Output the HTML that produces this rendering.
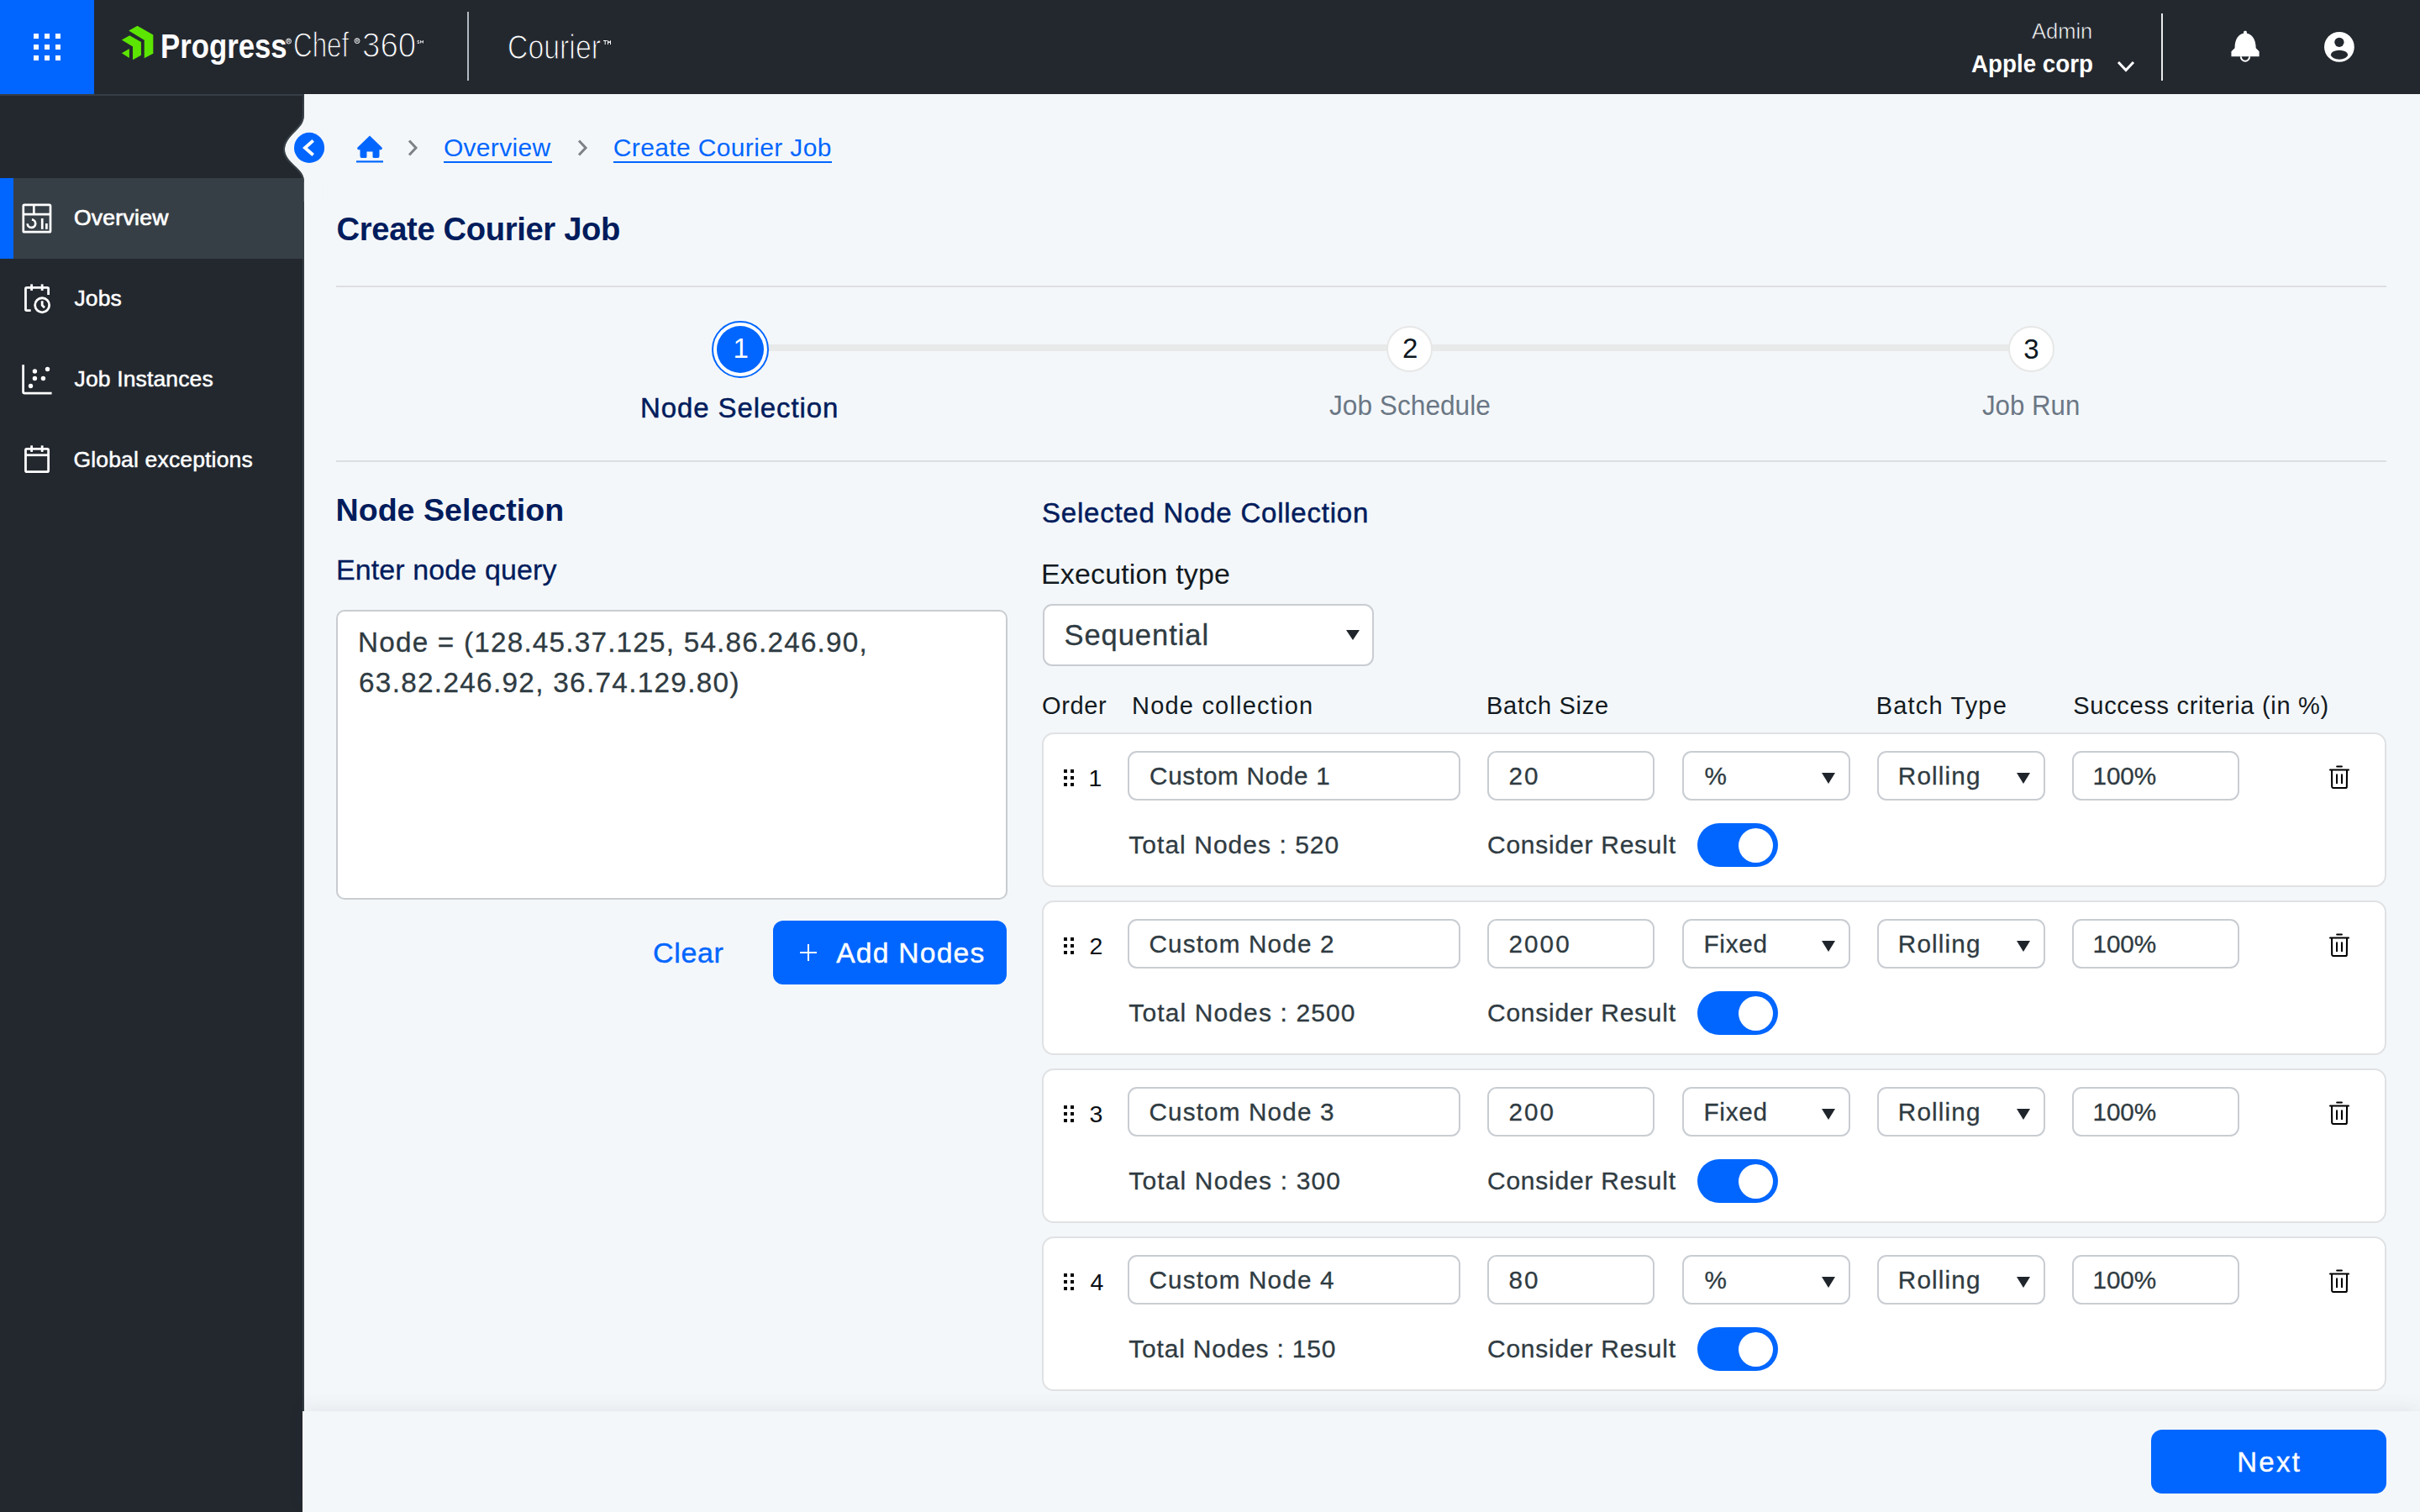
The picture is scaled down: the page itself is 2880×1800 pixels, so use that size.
<!DOCTYPE html>
<html><head><meta charset="utf-8"><title>Create Courier Job</title>
<style>
html,body{margin:0;padding:0;}
body{width:2880px;height:1800px;overflow:hidden;position:relative;background:#f4f7fa;font-family:"Liberation Sans",sans-serif;}
.a{position:absolute;box-sizing:border-box;}
.t{position:absolute;white-space:nowrap;line-height:1;}
.inp{position:absolute;box-sizing:border-box;background:#fff;border:2px solid #c9cdd2;border-radius:11px;}
.tri{position:absolute;width:0;height:0;border-left:8px solid transparent;border-right:8px solid transparent;border-top:13px solid #1f252b;}
.card{position:absolute;box-sizing:border-box;left:1240px;width:1600px;height:184px;background:#fff;border:2px solid #dfe1e3;border-radius:14px;}
.dot{position:absolute;width:4px;height:4px;background:#000;}
.tog{position:absolute;left:2020px;width:96px;height:52px;border-radius:26px;background:#0066ff;}
@media (max-width:2000px){html{zoom:0.5;}}
.tog:after{content:"";position:absolute;left:49px;top:5.5px;width:41px;height:41px;border-radius:50%;background:#fff;}
</style></head><body>
<!-- header -->
<div class="a" style="left:0;top:0;width:2880px;height:112px;background:#23282f;"></div>
<div class="a" style="left:0;top:0;width:112px;height:112px;background:#0066ff;"></div>
<svg class="a" style="left:0;top:0" width="112" height="112">
 <g fill="#fff">
 <rect x="40" y="40" width="6" height="6"/><rect x="53" y="40" width="6" height="6"/><rect x="66" y="40" width="6" height="6"/>
 <rect x="40" y="53" width="6" height="6"/><rect x="53" y="53" width="6" height="6"/><rect x="66" y="53" width="6" height="6"/>
 <rect x="40" y="66" width="6" height="6"/><rect x="53" y="66" width="6" height="6"/><rect x="66" y="66" width="6" height="6"/>
 </g></svg>
<svg class="a" style="left:140px;top:26px" width="50" height="50" viewBox="0 0 1512 1512">
 <g fill="#5ce500">
 <polygon points="400,320 710,145 1280,470 1280,1140 960,1310 960,660"/>
 <polygon points="145,650 430,490 845,725 845,1200 545,1365 545,890"/>
 <polygon points="145,1130 420,965 420,1300"/>
 </g></svg>
<svg class="a" style="left:330px;top:40px" width="400" height="20" viewBox="330 40 400 20" fill="none" stroke="#fff" stroke-width="0.9">
 <circle cx="343.5" cy="49" r="3"/><path d="M342.5,50.8 L342.5,47.2 L344,47.2 Q345,47.2 345,48.2 Q345,49.1 344,49.1 L342.5,49.1 M344,49.1 L345,50.8" stroke-width="0.7"/>
 <circle cx="425" cy="48.6" r="3"/><path d="M424,50.4 L424,46.8 L425.5,46.8 Q426.5,46.8 426.5,47.8 Q426.5,48.7 425.5,48.7 L424,48.7 M425.5,48.7 L426.5,50.4" stroke-width="0.7"/>
 <path d="M499,48.5 Q496.5,48 496.5,49 Q496.5,49.8 498,50 Q499.5,50.3 499,51.3 Q498.5,51.8 496.5,51.3 M500.5,51.5 L500.5,48.3 L502,50.5 L503.5,48.3 L503.5,51.5" stroke-width="0.8"/>
 <path d="M718,48.5 L722.5,48.5 M720.2,48.5 L720.2,53 M723.5,53 L723.5,48.5 L725,51 L726.5,48.5 L726.5,53" stroke-width="1"/>
</svg>
<div class="a" style="left:556px;top:14px;width:2px;height:82px;background:#b2b9c1;"></div>
<svg class="a" style="left:2510px;top:66px" width="40" height="30" viewBox="0 0 40 30"><polyline points="11,8 20,17.5 29,8" fill="none" stroke="#fff" stroke-width="3"/></svg>
<div class="a" style="left:2572px;top:16px;width:2px;height:80px;background:#e8eaec;"></div>
<svg class="a" style="left:2620px;top:20px" width="220" height="80" viewBox="0 0 2420 880">
 <g fill="#fff">
  <rect x="552" y="185" width="40" height="45" rx="15"/>
  <path d="M435,410 C435,290 490,215 572,215 C654,215 712,290 712,410 L755,455 L755,520 L390,520 L390,455 Z"/>
  <path d="M515,520 A57,60 0 0 0 629,520" fill="none" stroke="#fff" stroke-width="22"/>
  <circle cx="1803" cy="395" r="197"/>
 </g>
 <g fill="#23282f">
  <circle cx="1803" cy="333" r="62"/>
  <ellipse cx="1804" cy="497" rx="111" ry="60"/>
 </g>
</svg>
<!-- sidebar -->
<div class="a" style="left:0;top:112px;width:362px;height:1688px;background:#23282f;border-top:2px solid #363d44;"></div>
<div class="a" style="left:360px;top:112px;width:2px;height:26px;background:#363d44;"></div>
<div class="a" style="left:360px;top:308px;width:2px;height:1372px;background:#343b42;"></div>
<div class="a" style="left:0;top:212px;width:362px;height:96px;background:#373f46;"></div>
<div class="a" style="left:0;top:212px;width:16px;height:96px;background:#0066ff;"></div>
<svg class="a" style="left:20px;top:236px" width="50" height="48" viewBox="0 0 1575 1512" fill="none" stroke="#fff" stroke-width="85">
 <rect x="245" y="245" width="1015" height="1020" rx="40"/>
 <line x1="245" y1="600" x2="1260" y2="600"/><line x1="640" y1="245" x2="640" y2="600"/>
 <path d="M565,800 A150,150 0 1 1 400,950"/>
 <line x1="952" y1="755" x2="952" y2="1160"/><line x1="1115" y1="945" x2="1115" y2="1160"/>
</svg>
<svg class="a" style="left:20px;top:332px" width="50" height="48" viewBox="0 0 1575 1512" fill="none" stroke="#fff" stroke-width="88">
 <path d="M525,1185 L370,1185 Q330,1185 330,1145 L330,370 Q330,330 370,330 L1145,330 Q1185,330 1185,370 L1185,600"/>
 <line x1="555" y1="200" x2="555" y2="440"/><line x1="950" y1="200" x2="950" y2="440"/>
 <circle cx="950" cy="985" r="268"/>
 <path d="M950,830 L950,990 L1040,1080"/>
</svg>
<svg class="a" style="left:20px;top:428px" width="50" height="48" viewBox="0 0 1575 1512">
 <path d="M240,200 L240,1215 Q240,1265 290,1265 L1310,1265" fill="none" stroke="#fff" stroke-width="88"/>
 <g fill="#fff"><circle cx="675" cy="440" r="85"/><circle cx="1150" cy="360" r="85"/><circle cx="675" cy="710" r="85"/><circle cx="990" cy="710" r="85"/><circle cx="520" cy="990" r="85"/></g>
</svg>
<svg class="a" style="left:20px;top:524px" width="50" height="48" viewBox="0 0 1575 1512" fill="none" stroke="#fff" stroke-width="88">
 <rect x="330" y="330" width="855" height="855" rx="45"/>
 <line x1="330" y1="560" x2="1185" y2="560"/>
 <line x1="555" y1="200" x2="555" y2="440"/><line x1="950" y1="200" x2="950" y2="440"/>
</svg>
<!-- notch -->
<svg class="a" style="left:300px;top:100px" width="180" height="140" viewBox="0 0 1944 1512">
 <path d="M668,390 C668,480 640,520 575,585 C500,660 420,740 420,840 C420,935 490,1000 575,1080 C640,1140 668,1180 668,1260 L668,1512 L900,1512 L900,390 Z" fill="#f4f7fa" stroke="none"/>
 <path transform="translate(-10,0)" d="M668,260 L668,390 C668,480 640,520 575,585 C500,660 420,740 420,840 C420,935 490,1000 575,1080 C640,1140 668,1180 668,1260" fill="none" stroke="#3a4249" stroke-width="22"/>
 <circle cx="735" cy="820" r="195" fill="#0066ff"/>
 <polyline points="785,728 680,820 785,912" fill="none" stroke="#fff" stroke-width="42"/>
</svg>
<!-- breadcrumb -->
<svg class="a" style="left:420px;top:156px" width="40" height="40" viewBox="0 0 40 40">
 <path d="M20,5.5 L34.5,19.5 Q35.5,21 34,22.3 L31.5,22.3 L31.5,30 Q31.5,32 29.5,32 L25,32 Q23.5,32 23.5,30.5 L23.5,24.5 L16.5,24.5 L16.5,30.5 Q16.5,32 15,32 L10.5,32 Q8.5,32 8.5,30 L8.5,22.3 L6,22.3 Q4.5,21 5.5,19.5 Z" fill="#0066ff"/>
 <rect x="4" y="35.3" width="32" height="2.2" fill="#0066ff"/>
</svg>
<svg class="a" style="left:480px;top:160px" width="24" height="32" viewBox="0 0 24 32"><polyline points="7,7.5 15,16 7,24.5" fill="none" stroke="#7d8287" stroke-width="3"/></svg>
<svg class="a" style="left:682px;top:160px" width="24" height="32" viewBox="0 0 24 32"><polyline points="7,7.5 15,16 7,24.5" fill="none" stroke="#7d8287" stroke-width="3"/></svg>
<div class="a" style="left:528px;top:191.5px;width:128.5px;height:2.3px;background:#0066ff;"></div>
<div class="a" style="left:730px;top:191.5px;width:259.5px;height:2.3px;background:#0066ff;"></div>
<!-- separators -->
<div class="a" style="left:400px;top:340px;width:2440px;height:2px;background:#dcdedf;"></div>
<div class="a" style="left:400px;top:548px;width:2440px;height:2px;background:#dcdedf;"></div>
<!-- stepper -->
<div class="a" style="left:912px;top:410px;width:1480px;height:8px;background:#e8e9e9;"></div>
<div class="a" style="left:847px;top:382px;width:68px;height:68px;border-radius:50%;border:2.5px solid #0066ff;background:#fff;"></div>
<div class="a" style="left:853px;top:388px;width:56px;height:56px;border-radius:50%;background:#0066ff;"></div>
<div class="a" style="left:1650px;top:388px;width:55px;height:55px;border-radius:50%;border:2px solid #e6e7e7;background:#fff;"></div>
<div class="a" style="left:2389.5px;top:388px;width:55px;height:55px;border-radius:50%;border:2px solid #e6e7e7;background:#fff;"></div>
<!-- left panel -->
<div class="a" style="left:400px;top:726px;width:799px;height:345px;background:#fff;border:2px solid #c9ccd0;border-radius:10px;"></div>
<div class="a" style="left:920px;top:1096px;width:278px;height:76px;background:#0066ff;border-radius:12px;"></div>
<div class="a" style="left:951.5px;top:1132.8px;width:20.5px;height:2.5px;background:#fff;"></div>
<div class="a" style="left:960.5px;top:1123.8px;width:2.5px;height:20.5px;background:#fff;"></div>
<!-- right panel -->
<div class="inp" style="left:1241px;top:719px;width:394px;height:74px;"></div>
<div class="tri" style="left:1601.5px;top:749.5px;border-left-width:8.2px;border-right-width:8.2px;border-top-width:12.5px;"></div>
<div class="card" style="top:872px;"></div>
<div class="dot" style="left:1266px;top:916px"></div><div class="dot" style="left:1274px;top:916px"></div>
<div class="dot" style="left:1266px;top:924px"></div><div class="dot" style="left:1274px;top:924px"></div>
<div class="dot" style="left:1266px;top:932px"></div><div class="dot" style="left:1274px;top:932px"></div>
<div class="inp" style="left:1342px;top:894px;width:396px;height:59px;"></div>
<div class="inp" style="left:1770px;top:894px;width:199px;height:59px;"></div>
<div class="inp" style="left:2002px;top:894px;width:200px;height:59px;"></div>
<div class="tri" style="left:2168px;top:919.5px;"></div>
<div class="inp" style="left:2234px;top:894px;width:199.5px;height:59px;"></div>
<div class="tri" style="left:2400px;top:919.5px;"></div>
<div class="inp" style="left:2466px;top:894px;width:199px;height:59px;"></div>
<svg class="a" style="left:2750px;top:895px" width="70" height="60" viewBox="0 0 1764 1512" fill="none" stroke="#000" stroke-width="52" stroke-linecap="round">
 <line x1="785" y1="440" x2="930" y2="440"/><line x1="580" y1="540" x2="1135" y2="540"/>
 <path d="M630,545 L635,1050 Q640,1085 680,1085 L1040,1085 Q1080,1085 1080,1050 L1085,545" stroke-linecap="butt"/>
 <line x1="782" y1="690" x2="782" y2="940"/><line x1="932" y1="690" x2="932" y2="940"/>
</svg>
<div class="tog" style="top:980px;"></div>
<div class="card" style="top:1072px;"></div>
<div class="dot" style="left:1266px;top:1116px"></div><div class="dot" style="left:1274px;top:1116px"></div>
<div class="dot" style="left:1266px;top:1124px"></div><div class="dot" style="left:1274px;top:1124px"></div>
<div class="dot" style="left:1266px;top:1132px"></div><div class="dot" style="left:1274px;top:1132px"></div>
<div class="inp" style="left:1342px;top:1094px;width:396px;height:59px;"></div>
<div class="inp" style="left:1770px;top:1094px;width:199px;height:59px;"></div>
<div class="inp" style="left:2002px;top:1094px;width:200px;height:59px;"></div>
<div class="tri" style="left:2168px;top:1119.5px;"></div>
<div class="inp" style="left:2234px;top:1094px;width:199.5px;height:59px;"></div>
<div class="tri" style="left:2400px;top:1119.5px;"></div>
<div class="inp" style="left:2466px;top:1094px;width:199px;height:59px;"></div>
<svg class="a" style="left:2750px;top:1095px" width="70" height="60" viewBox="0 0 1764 1512" fill="none" stroke="#000" stroke-width="52" stroke-linecap="round">
 <line x1="785" y1="440" x2="930" y2="440"/><line x1="580" y1="540" x2="1135" y2="540"/>
 <path d="M630,545 L635,1050 Q640,1085 680,1085 L1040,1085 Q1080,1085 1080,1050 L1085,545" stroke-linecap="butt"/>
 <line x1="782" y1="690" x2="782" y2="940"/><line x1="932" y1="690" x2="932" y2="940"/>
</svg>
<div class="tog" style="top:1180px;"></div>
<div class="card" style="top:1272px;"></div>
<div class="dot" style="left:1266px;top:1316px"></div><div class="dot" style="left:1274px;top:1316px"></div>
<div class="dot" style="left:1266px;top:1324px"></div><div class="dot" style="left:1274px;top:1324px"></div>
<div class="dot" style="left:1266px;top:1332px"></div><div class="dot" style="left:1274px;top:1332px"></div>
<div class="inp" style="left:1342px;top:1294px;width:396px;height:59px;"></div>
<div class="inp" style="left:1770px;top:1294px;width:199px;height:59px;"></div>
<div class="inp" style="left:2002px;top:1294px;width:200px;height:59px;"></div>
<div class="tri" style="left:2168px;top:1319.5px;"></div>
<div class="inp" style="left:2234px;top:1294px;width:199.5px;height:59px;"></div>
<div class="tri" style="left:2400px;top:1319.5px;"></div>
<div class="inp" style="left:2466px;top:1294px;width:199px;height:59px;"></div>
<svg class="a" style="left:2750px;top:1295px" width="70" height="60" viewBox="0 0 1764 1512" fill="none" stroke="#000" stroke-width="52" stroke-linecap="round">
 <line x1="785" y1="440" x2="930" y2="440"/><line x1="580" y1="540" x2="1135" y2="540"/>
 <path d="M630,545 L635,1050 Q640,1085 680,1085 L1040,1085 Q1080,1085 1080,1050 L1085,545" stroke-linecap="butt"/>
 <line x1="782" y1="690" x2="782" y2="940"/><line x1="932" y1="690" x2="932" y2="940"/>
</svg>
<div class="tog" style="top:1380px;"></div>
<div class="card" style="top:1472px;"></div>
<div class="dot" style="left:1266px;top:1516px"></div><div class="dot" style="left:1274px;top:1516px"></div>
<div class="dot" style="left:1266px;top:1524px"></div><div class="dot" style="left:1274px;top:1524px"></div>
<div class="dot" style="left:1266px;top:1532px"></div><div class="dot" style="left:1274px;top:1532px"></div>
<div class="inp" style="left:1342px;top:1494px;width:396px;height:59px;"></div>
<div class="inp" style="left:1770px;top:1494px;width:199px;height:59px;"></div>
<div class="inp" style="left:2002px;top:1494px;width:200px;height:59px;"></div>
<div class="tri" style="left:2168px;top:1519.5px;"></div>
<div class="inp" style="left:2234px;top:1494px;width:199.5px;height:59px;"></div>
<div class="tri" style="left:2400px;top:1519.5px;"></div>
<div class="inp" style="left:2466px;top:1494px;width:199px;height:59px;"></div>
<svg class="a" style="left:2750px;top:1495px" width="70" height="60" viewBox="0 0 1764 1512" fill="none" stroke="#000" stroke-width="52" stroke-linecap="round">
 <line x1="785" y1="440" x2="930" y2="440"/><line x1="580" y1="540" x2="1135" y2="540"/>
 <path d="M630,545 L635,1050 Q640,1085 680,1085 L1040,1085 Q1080,1085 1080,1050 L1085,545" stroke-linecap="butt"/>
 <line x1="782" y1="690" x2="782" y2="940"/><line x1="932" y1="690" x2="932" y2="940"/>
</svg>
<div class="tog" style="top:1580px;"></div>
<!-- footer -->
<div class="a" style="left:360px;top:1680px;width:2520px;height:120px;background:#f4f7fa;box-shadow:0 -6px 18px rgba(40,50,70,0.07);"></div>
<div class="a" style="left:2560px;top:1702px;width:280px;height:76px;background:#0066ff;border-radius:13px;"></div>
<div class="t" style="left:190.8px;top:35.3px;font-size:40px;font-weight:700;color:#fff;transform:scaleX(0.8685);transform-origin:0 0;">Progress</div>
<div class="t" style="left:348.5px;top:33.4px;font-size:42px;font-weight:400;color:#fff;transform:scaleX(0.7467);transform-origin:0 0;-webkit-text-stroke:1.3px #23282f;">Chef</div>
<div class="t" style="left:430.5px;top:33.4px;font-size:42px;font-weight:400;color:#fff;transform:scaleX(0.9156);transform-origin:0 0;-webkit-text-stroke:1.3px #23282f;">360</div>
<div class="t" style="left:604.1px;top:36.2px;font-size:41px;font-weight:400;color:#fff;transform:scaleX(0.8256);transform-origin:0 0;-webkit-text-stroke:1.2px #23282f;">Courier</div>
<div class="t" style="left:2418.0px;top:25.0px;font-size:25px;font-weight:400;color:#fff;transform:scaleX(1.0192);transform-origin:0 0;-webkit-text-stroke:0.6px #23282f;">Admin</div>
<div class="t" style="left:2346.0px;top:61.2px;font-size:29.5px;font-weight:700;color:#fff;transform:scaleX(0.9409);transform-origin:0 0;">Apple corp</div>
<div class="t" style="left:87.9px;top:245.9px;font-size:26.5px;font-weight:400;color:#fff;letter-spacing:0.29px;-webkit-text-stroke:0.7px #fff;">Overview</div>
<div class="t" style="left:88.5px;top:342.3px;font-size:26.5px;font-weight:400;color:#fff;letter-spacing:0.09px;-webkit-text-stroke:0.5px #fff;">Jobs</div>
<div class="t" style="left:88.5px;top:437.8px;font-size:26.5px;font-weight:400;color:#fff;letter-spacing:0.14px;-webkit-text-stroke:0.5px #fff;">Job Instances</div>
<div class="t" style="left:87.5px;top:534.1px;font-size:26.5px;font-weight:400;color:#fff;letter-spacing:0.16px;-webkit-text-stroke:0.5px #fff;">Global exceptions</div>
<div class="t" style="left:527.9px;top:160.8px;font-size:30px;font-weight:400;color:#0066ff;letter-spacing:0.31px;">Overview</div>
<div class="t" style="left:729.8px;top:160.8px;font-size:30px;font-weight:400;color:#0066ff;letter-spacing:0.36px;">Create Courier Job</div>
<div class="t" style="left:400.5px;top:253.6px;font-size:38.2px;font-weight:700;color:#001c5c;letter-spacing:-0.35px;">Create Courier Job</div>
<div class="t" style="left:872.5px;top:398.4px;font-size:33px;font-weight:400;color:#fff;">1</div>
<div class="t" style="left:1669.0px;top:398.1px;font-size:33px;font-weight:400;color:#0d1720;">2</div>
<div class="t" style="left:2408.3px;top:398.6px;font-size:33px;font-weight:400;color:#0d1720;">3</div>
<div class="t" style="left:762.0px;top:468.6px;font-size:33px;font-weight:400;color:#001c5c;letter-spacing:0.89px;-webkit-text-stroke:0.5px #001c5c;">Node Selection</div>
<div class="t" style="left:1582.0px;top:465.2px;font-size:34px;font-weight:400;color:#6b7785;transform:scaleX(0.9311);transform-origin:0 0;">Job Schedule</div>
<div class="t" style="left:2358.7px;top:465.2px;font-size:34px;font-weight:400;color:#6b7785;transform:scaleX(0.9188);transform-origin:0 0;">Job Run</div>
<div class="t" style="left:399.5px;top:588.5px;font-size:37.6px;font-weight:700;color:#001c5c;letter-spacing:0.02px;">Node Selection</div>
<div class="t" style="left:399.9px;top:661.3px;font-size:34px;font-weight:400;color:#001c5c;letter-spacing:0.11px;-webkit-text-stroke:0.3px #001c5c;">Enter node query</div>
<div class="t" style="left:426.0px;top:747.7px;font-size:33.3px;font-weight:400;color:#2f3b42;letter-spacing:1.20px;-webkit-text-stroke:0.3px #2f3b42;">Node = (128.45.37.125, 54.86.246.90,</div>
<div class="t" style="left:427.0px;top:795.6px;font-size:33.3px;font-weight:400;color:#2f3b42;letter-spacing:1.31px;-webkit-text-stroke:0.3px #2f3b42;">63.82.246.92, 36.74.129.80)</div>
<div class="t" style="left:777.0px;top:1117.2px;font-size:34px;font-weight:400;color:#0066ff;letter-spacing:0.64px;-webkit-text-stroke:0.4px #0066ff;">Clear</div>
<div class="t" style="left:995.2px;top:1117.5px;font-size:33.7px;font-weight:400;color:#fff;letter-spacing:1.18px;-webkit-text-stroke:0.4px #fff;">Add Nodes</div>
<div class="t" style="left:1240.0px;top:593.6px;font-size:33px;font-weight:400;color:#001c5c;letter-spacing:0.77px;-webkit-text-stroke:0.5px #001c5c;">Selected Node Collection</div>
<div class="t" style="left:1239.0px;top:665.8px;font-size:34px;font-weight:400;color:#121a21;letter-spacing:0.14px;">Execution type</div>
<div class="t" style="left:1266.5px;top:739.3px;font-size:34.5px;font-weight:400;color:#2f3b42;letter-spacing:0.95px;-webkit-text-stroke:0.3px #2f3b42;">Sequential</div>
<div class="t" style="left:1240.0px;top:826.0px;font-size:29px;font-weight:400;color:#121a21;letter-spacing:0.63px;">Order</div>
<div class="t" style="left:1347.0px;top:826.0px;font-size:29px;font-weight:400;color:#121a21;letter-spacing:1.20px;">Node collection</div>
<div class="t" style="left:1769.0px;top:826.0px;font-size:29px;font-weight:400;color:#121a21;letter-spacing:0.72px;">Batch Size</div>
<div class="t" style="left:2232.7px;top:826.0px;font-size:29px;font-weight:400;color:#121a21;letter-spacing:1.17px;">Batch Type</div>
<div class="t" style="left:2467.3px;top:826.0px;font-size:29px;font-weight:400;color:#121a21;letter-spacing:0.70px;">Success criteria (in %)</div>
<div class="t" style="left:1295.6px;top:911.8px;font-size:28.5px;font-weight:400;color:#0a0f14;">1</div>
<div class="t" style="left:1368.0px;top:908.7px;font-size:29.7px;font-weight:400;color:#2f3b42;letter-spacing:0.71px;-webkit-text-stroke:0.3px #2f3b42;">Custom Node 1</div>
<div class="t" style="left:1795.6px;top:908.7px;font-size:29.7px;font-weight:400;color:#2f3b42;-webkit-text-stroke:0.3px #2f3b42;letter-spacing:2px;">20</div>
<div class="t" style="left:2028.5px;top:908.7px;font-size:29.7px;font-weight:400;color:#2f3b42;letter-spacing:0.71px;-webkit-text-stroke:0.3px #2f3b42;">%</div>
<div class="t" style="left:2258.8px;top:908.7px;font-size:29.7px;font-weight:400;color:#2f3b42;letter-spacing:1.14px;-webkit-text-stroke:0.3px #2f3b42;">Rolling</div>
<div class="t" style="left:2490.5px;top:908.7px;font-size:29.7px;font-weight:400;color:#2f3b42;letter-spacing:-0.11px;-webkit-text-stroke:0.3px #2f3b42;">100%</div>
<div class="t" style="left:1343.3px;top:991.1px;font-size:30px;font-weight:400;color:#2f3b42;letter-spacing:1.03px;-webkit-text-stroke:0.3px #2f3b42;">Total Nodes : 520</div>
<div class="t" style="left:1770.0px;top:991.1px;font-size:30px;font-weight:400;color:#2f3b42;letter-spacing:0.76px;-webkit-text-stroke:0.3px #2f3b42;">Consider Result</div>
<div class="t" style="left:1296.6px;top:1111.8px;font-size:28.5px;font-weight:400;color:#0a0f14;">2</div>
<div class="t" style="left:1367.4px;top:1108.7px;font-size:29.7px;font-weight:400;color:#2f3b42;letter-spacing:1.15px;-webkit-text-stroke:0.3px #2f3b42;">Custom Node 2</div>
<div class="t" style="left:1795.6px;top:1108.7px;font-size:29.7px;font-weight:400;color:#2f3b42;-webkit-text-stroke:0.3px #2f3b42;letter-spacing:2px;">2000</div>
<div class="t" style="left:2027.5px;top:1108.7px;font-size:29.7px;font-weight:400;color:#2f3b42;letter-spacing:0.71px;-webkit-text-stroke:0.3px #2f3b42;">Fixed</div>
<div class="t" style="left:2258.8px;top:1108.7px;font-size:29.7px;font-weight:400;color:#2f3b42;letter-spacing:1.14px;-webkit-text-stroke:0.3px #2f3b42;">Rolling</div>
<div class="t" style="left:2490.5px;top:1108.7px;font-size:29.7px;font-weight:400;color:#2f3b42;letter-spacing:-0.11px;-webkit-text-stroke:0.3px #2f3b42;">100%</div>
<div class="t" style="left:1343.3px;top:1191.1px;font-size:30px;font-weight:400;color:#2f3b42;letter-spacing:1.12px;-webkit-text-stroke:0.3px #2f3b42;">Total Nodes : 2500</div>
<div class="t" style="left:1770.0px;top:1191.1px;font-size:30px;font-weight:400;color:#2f3b42;letter-spacing:0.76px;-webkit-text-stroke:0.3px #2f3b42;">Consider Result</div>
<div class="t" style="left:1296.6px;top:1311.8px;font-size:28.5px;font-weight:400;color:#0a0f14;">3</div>
<div class="t" style="left:1367.4px;top:1308.7px;font-size:29.7px;font-weight:400;color:#2f3b42;letter-spacing:1.15px;-webkit-text-stroke:0.3px #2f3b42;">Custom Node 3</div>
<div class="t" style="left:1795.6px;top:1308.7px;font-size:29.7px;font-weight:400;color:#2f3b42;-webkit-text-stroke:0.3px #2f3b42;letter-spacing:2px;">200</div>
<div class="t" style="left:2027.5px;top:1308.7px;font-size:29.7px;font-weight:400;color:#2f3b42;letter-spacing:0.71px;-webkit-text-stroke:0.3px #2f3b42;">Fixed</div>
<div class="t" style="left:2258.8px;top:1308.7px;font-size:29.7px;font-weight:400;color:#2f3b42;letter-spacing:1.14px;-webkit-text-stroke:0.3px #2f3b42;">Rolling</div>
<div class="t" style="left:2490.5px;top:1308.7px;font-size:29.7px;font-weight:400;color:#2f3b42;letter-spacing:-0.11px;-webkit-text-stroke:0.3px #2f3b42;">100%</div>
<div class="t" style="left:1343.3px;top:1391.1px;font-size:30px;font-weight:400;color:#2f3b42;letter-spacing:1.14px;-webkit-text-stroke:0.3px #2f3b42;">Total Nodes : 300</div>
<div class="t" style="left:1770.0px;top:1391.1px;font-size:30px;font-weight:400;color:#2f3b42;letter-spacing:0.76px;-webkit-text-stroke:0.3px #2f3b42;">Consider Result</div>
<div class="t" style="left:1297.6px;top:1511.8px;font-size:28.5px;font-weight:400;color:#0a0f14;">4</div>
<div class="t" style="left:1367.4px;top:1508.7px;font-size:29.7px;font-weight:400;color:#2f3b42;letter-spacing:1.15px;-webkit-text-stroke:0.3px #2f3b42;">Custom Node 4</div>
<div class="t" style="left:1795.6px;top:1508.7px;font-size:29.7px;font-weight:400;color:#2f3b42;-webkit-text-stroke:0.3px #2f3b42;letter-spacing:2px;">80</div>
<div class="t" style="left:2028.5px;top:1508.7px;font-size:29.7px;font-weight:400;color:#2f3b42;letter-spacing:0.71px;-webkit-text-stroke:0.3px #2f3b42;">%</div>
<div class="t" style="left:2258.8px;top:1508.7px;font-size:29.7px;font-weight:400;color:#2f3b42;letter-spacing:1.14px;-webkit-text-stroke:0.3px #2f3b42;">Rolling</div>
<div class="t" style="left:2490.5px;top:1508.7px;font-size:29.7px;font-weight:400;color:#2f3b42;letter-spacing:-0.11px;-webkit-text-stroke:0.3px #2f3b42;">100%</div>
<div class="t" style="left:1343.3px;top:1591.1px;font-size:30px;font-weight:400;color:#2f3b42;letter-spacing:0.79px;-webkit-text-stroke:0.3px #2f3b42;">Total Nodes : 150</div>
<div class="t" style="left:1770.0px;top:1591.1px;font-size:30px;font-weight:400;color:#2f3b42;letter-spacing:0.76px;-webkit-text-stroke:0.3px #2f3b42;">Consider Result</div>
<div class="t" style="left:2662.3px;top:1723.8px;font-size:33px;font-weight:400;color:#fff;letter-spacing:2.24px;-webkit-text-stroke:0.4px #fff;">Next</div>
</body></html>
